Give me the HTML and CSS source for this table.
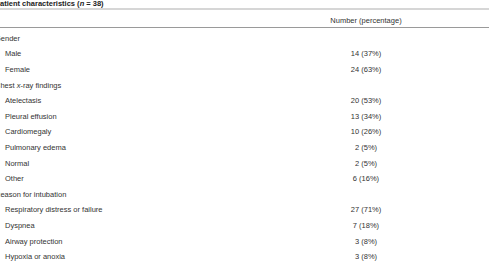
FILE: index.html
```html
<!DOCTYPE html>
<html>
<head>
<meta charset="utf-8">
<link rel="stylesheet" href="styles.css">
</head>
<body>
<div class="wrap">
  <div class="title">Patient characteristics (<i>n</i> = 38)</div>
  <table class="tbl">
    <thead>
      <tr><th class="c1"></th><th class="c2">Number (percentage)</th></tr>
    </thead>
    <tbody>
      <tr class="cat"><td>Gender</td><td></td></tr>
      <tr><td class="sub">Male</td><td class="num">14 (37%)</td></tr>
      <tr><td class="sub">Female</td><td class="num">24 (63%)</td></tr>
      <tr class="cat"><td>Chest <i>x</i>-ray findings</td><td></td></tr>
      <tr><td class="sub">Atelectasis</td><td class="num">20 (53%)</td></tr>
      <tr><td class="sub">Pleural effusion</td><td class="num">13 (34%)</td></tr>
      <tr><td class="sub">Cardiomegaly</td><td class="num">10 (26%)</td></tr>
      <tr><td class="sub">Pulmonary edema</td><td class="num">2 (5%)</td></tr>
      <tr><td class="sub">Normal</td><td class="num">2 (5%)</td></tr>
      <tr><td class="sub">Other</td><td class="num">6 (16%)</td></tr>
      <tr class="cat"><td>Reason for intubation</td><td></td></tr>
      <tr><td class="sub">Respiratory distress or failure</td><td class="num">27 (71%)</td></tr>
      <tr><td class="sub">Dyspnea</td><td class="num">7 (18%)</td></tr>
      <tr><td class="sub">Airway protection</td><td class="num">3 (8%)</td></tr>
      <tr><td class="sub">Hypoxia or anoxia</td><td class="num">3 (8%)</td></tr>
    </tbody>
  </table>
</div>
</body>
</html>
```
FILE: styles.css
```css
html, body {
  margin: 0;
  padding: 0;
  background: #fff;
}
body {
  overflow: hidden;
  font-family: "Liberation Sans", Arial, sans-serif;
  color: #333;
}
.wrap {
  margin-left: -5px;
  width: 494px;
}
.title {
  font-size: 7.5px;
  font-weight: bold;
  line-height: 9px;
  height: 9px;
  margin-top: -1px;
  color: #222;
  border-bottom: 2px solid #d6d6d6;
}
.tbl {
  width: 494px;
  border-collapse: collapse;
  font-size: 7.5px;
  table-layout: fixed;
}
.tbl th {
  font-weight: normal;
  height: 17px;
  padding: 4px 0 0 0;
  box-sizing: border-box;
  line-height: 9px;
  border-bottom: 1px solid #9a9a9a;
}
.tbl .c1 { width: 248px; }
.tbl .c2 { width: 246px; text-align: center; }
.tbl td {
  height: 15.6px;
  padding: 0;
  line-height: 9px;
  vertical-align: middle;
}
.tbl tbody tr:first-child td {
  padding-top: 3px;
}
.tbl .sub { padding-left: 10px; }
.tbl .num { text-align: center; }
```
